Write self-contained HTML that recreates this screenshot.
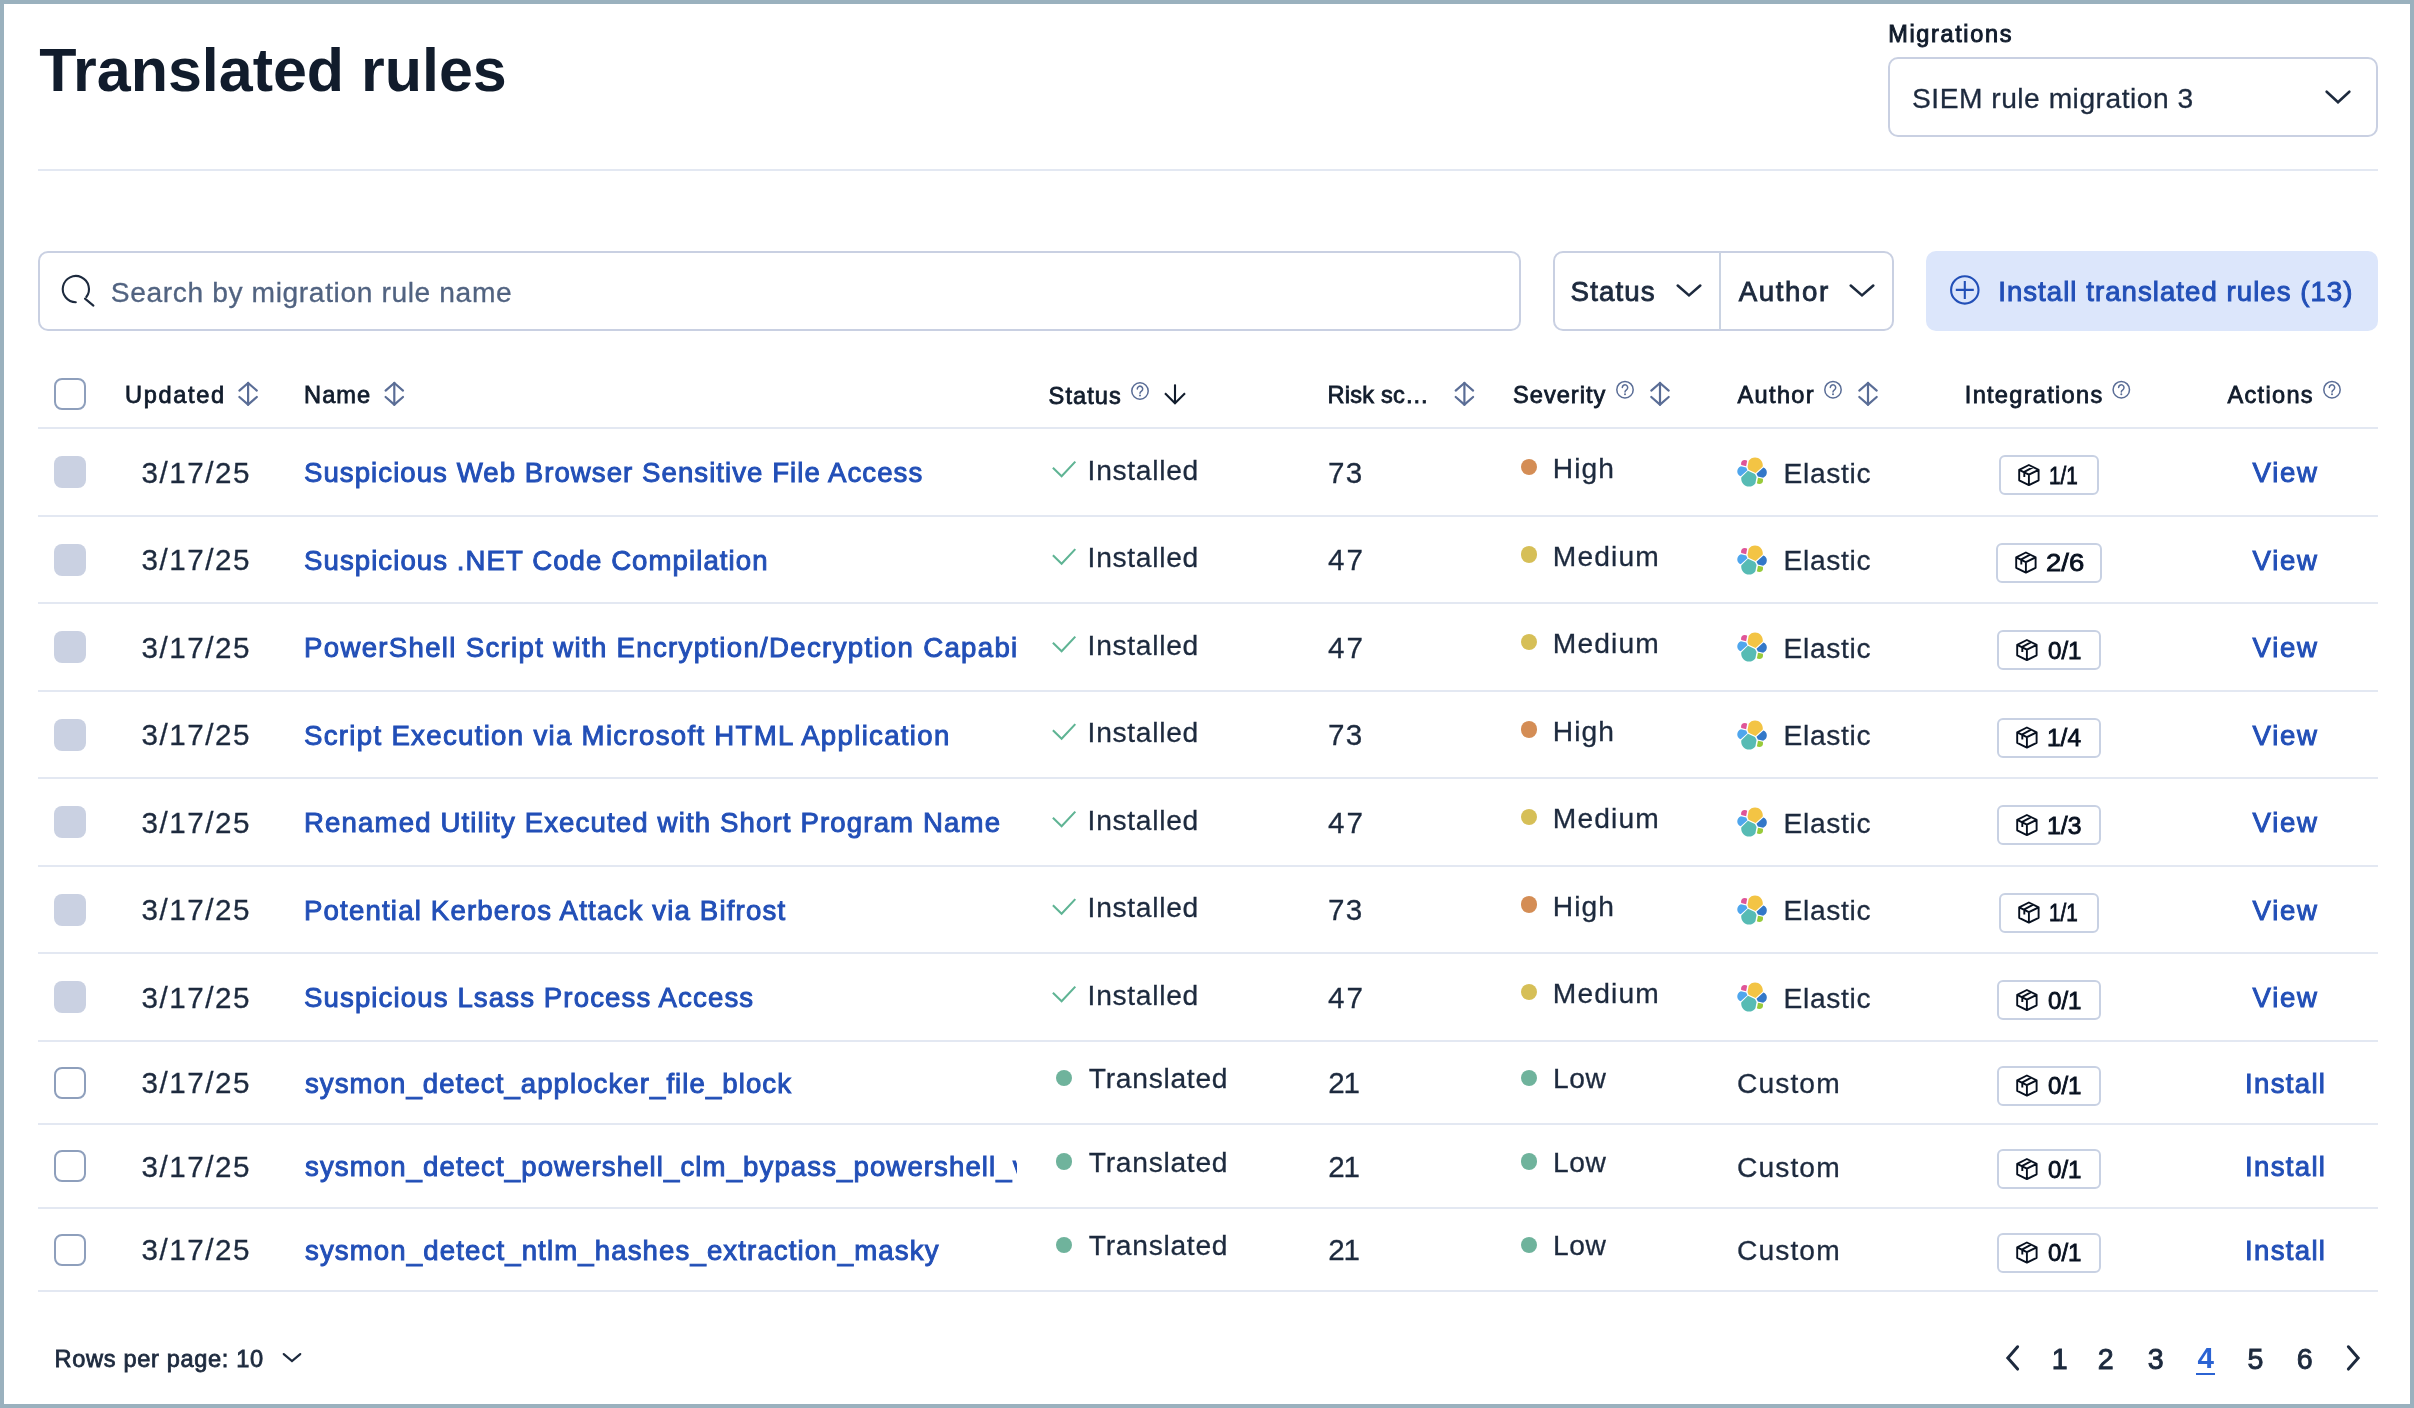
<!DOCTYPE html><html><head><meta charset="utf-8"><title>Translated rules</title><style>

html,body{margin:0;padding:0;}
body{width:2414px;height:1408px;background:#fff;position:relative;overflow:hidden;font-family:"Liberation Sans",sans-serif;}
.t{position:absolute;white-space:nowrap;line-height:40px;height:40px;}
.a{position:absolute;}
.hl{position:absolute;left:38px;width:2340px;height:2px;background:#e3e8f2;}
.box{position:absolute;box-sizing:border-box;border:2px solid #c9d0e2;background:#fff;}
.cb{position:absolute;box-sizing:border-box;width:32px;height:32px;border-radius:8px;}
.cb.on{border:2px solid #8e9fbc;background:#fff;}
.cb.off{background:#cad1e2;}
.dot{position:absolute;width:16.4px;height:16.4px;border-radius:50%;}
svg{position:absolute;overflow:visible;}
#root{position:absolute;left:0;top:0;width:2414px;height:1408px;will-change:transform;background:#fff;}

</style></head><body><div id="root">
<div class="a" style="left:0;top:0;width:2414px;height:1408px;box-sizing:border-box;border:4px solid #9ab1be;"></div>
<div class="hl" style="top:169px;"></div>
<div class="hl" style="top:427px;"></div>
<div class="hl" style="top:515px;"></div>
<div class="hl" style="top:602px;"></div>
<div class="hl" style="top:690px;"></div>
<div class="hl" style="top:777px;"></div>
<div class="hl" style="top:865px;"></div>
<div class="hl" style="top:952px;"></div>
<div class="hl" style="top:1040px;"></div>
<div class="hl" style="top:1123px;"></div>
<div class="hl" style="top:1207px;"></div>
<div class="hl" style="top:1290px;"></div>
<div class="box" style="left:1888px;top:57px;width:490px;height:80px;border-radius:10px;"></div>
<svg style="left:0;top:0" width="1" height="1"><path d="M2326.66 91.71 L2338.00 102.18 L2349.34 91.71" fill="none" stroke="#1d2a3e" stroke-width="2.6" stroke-linecap="round" stroke-linejoin="miter"/></svg>
<div class="box" style="left:38px;top:251px;width:1483px;height:80px;border-radius:10px;"></div>
<svg style="left:0;top:0" width="1" height="1"><g fill="none" stroke="#1d2a3e" stroke-width="2.1" stroke-linecap="round"><path d="M75.8 302.2 A13.1 13.1 0 1 1 86.3 297.0"/><path d="M85.0 298.6 L93.4 305.6"/></g></svg>
<div class="box" style="left:1553px;top:251px;width:341px;height:80px;border-radius:10px;"></div>
<div class="a" style="left:1719px;top:252px;width:2px;height:78px;background:#cad3e2;"></div>
<svg style="left:0;top:0" width="1" height="1"><path d="M1677.71 285.51 L1689.00 295.38 L1700.29 285.51" fill="none" stroke="#1d2a3e" stroke-width="2.6" stroke-linecap="round" stroke-linejoin="miter"/></svg>
<svg style="left:0;top:0" width="1" height="1"><path d="M1850.71 285.51 L1862.00 295.38 L1873.29 285.51" fill="none" stroke="#1d2a3e" stroke-width="2.6" stroke-linecap="round" stroke-linejoin="miter"/></svg>
<div class="a" style="left:1926px;top:251px;width:452px;height:80px;border-radius:10px;background:#dce6fb;"></div>
<svg style="left:0;top:0" width="1" height="1"><g fill="none" stroke="#224fb7" stroke-width="2.1" stroke-linecap="butt"><circle cx="1964.8" cy="289.9" r="13.7"/><path d="M1955.8 289.9 H1973.8 M1964.8 280.9 V298.9"/></g></svg>
<div class="cb on" style="left:54px;top:378px;"></div>
<svg style="left:0;top:0" width="1" height="1"><g fill="none" stroke="#5a6d96" stroke-width="2.2" stroke-linecap="round" stroke-linejoin="round"><path d="M248.1 382.8 V404.8"/><path d="M239.4 390.6 L248.1 383.0 L256.8 390.6"/><path d="M239.4 397.0 L248.1 404.6 L256.8 397.0"/></g></svg>
<svg style="left:0;top:0" width="1" height="1"><g fill="none" stroke="#5a6d96" stroke-width="2.2" stroke-linecap="round" stroke-linejoin="round"><path d="M394.3 382.8 V404.8"/><path d="M385.6 390.6 L394.3 383.0 L403.0 390.6"/><path d="M385.6 397.0 L394.3 404.6 L403.0 397.0"/></g></svg>
<svg style="left:0;top:0" width="1" height="1"><g fill="none" stroke="#5a6d96" stroke-width="2.2" stroke-linecap="round" stroke-linejoin="round"><path d="M1464.4 382.8 V404.8"/><path d="M1455.7 390.6 L1464.4 383.0 L1473.1000000000001 390.6"/><path d="M1455.7 397.0 L1464.4 404.6 L1473.1000000000001 397.0"/></g></svg>
<svg style="left:0;top:0" width="1" height="1"><g fill="none" stroke="#5a6d96" stroke-width="2.2" stroke-linecap="round" stroke-linejoin="round"><path d="M1660 382.8 V404.8"/><path d="M1651.3 390.6 L1660 383.0 L1668.7 390.6"/><path d="M1651.3 397.0 L1660 404.6 L1668.7 397.0"/></g></svg>
<svg style="left:0;top:0" width="1" height="1"><g fill="none" stroke="#5a6d96" stroke-width="2.2" stroke-linecap="round" stroke-linejoin="round"><path d="M1868 382.8 V404.8"/><path d="M1859.3 390.6 L1868 383.0 L1876.7 390.6"/><path d="M1859.3 397.0 L1868 404.6 L1876.7 397.0"/></g></svg>
<svg style="left:0;top:0" width="1" height="1"><g fill="none" stroke="#111c2c" stroke-width="2.1" stroke-linecap="butt" stroke-linejoin="miter"><path d="M1175 384.4 V403.0"/><path d="M1165 393.2 L1175 403.2 L1185 393.2"/></g></svg>
<svg style="left:0;top:0" width="1" height="1"><g fill="none" stroke="#5a6d96" stroke-width="1.5"><circle cx="1140" cy="391.0" r="8.2"/><path d="M1137.3 388.9 a2.7 2.7 0 1 1 4.2 2.2 c-1 .7 -1.5 1.1 -1.5 2.2" stroke-linecap="round"/></g><circle cx="1140" cy="395.6" r="1" fill="#5a6d96"/></svg>
<svg style="left:0;top:0" width="1" height="1"><g fill="none" stroke="#5a6d96" stroke-width="1.5"><circle cx="1625" cy="389.7" r="8.2"/><path d="M1622.3 387.59999999999997 a2.7 2.7 0 1 1 4.2 2.2 c-1 .7 -1.5 1.1 -1.5 2.2" stroke-linecap="round"/></g><circle cx="1625" cy="394.3" r="1" fill="#5a6d96"/></svg>
<svg style="left:0;top:0" width="1" height="1"><g fill="none" stroke="#5a6d96" stroke-width="1.5"><circle cx="1833" cy="389.7" r="8.2"/><path d="M1830.3 387.59999999999997 a2.7 2.7 0 1 1 4.2 2.2 c-1 .7 -1.5 1.1 -1.5 2.2" stroke-linecap="round"/></g><circle cx="1833" cy="394.3" r="1" fill="#5a6d96"/></svg>
<svg style="left:0;top:0" width="1" height="1"><g fill="none" stroke="#5a6d96" stroke-width="1.5"><circle cx="2121.3" cy="389.7" r="8.2"/><path d="M2118.6000000000004 387.59999999999997 a2.7 2.7 0 1 1 4.2 2.2 c-1 .7 -1.5 1.1 -1.5 2.2" stroke-linecap="round"/></g><circle cx="2121.3" cy="394.3" r="1" fill="#5a6d96"/></svg>
<svg style="left:0;top:0" width="1" height="1"><g fill="none" stroke="#5a6d96" stroke-width="1.5"><circle cx="2332" cy="389.7" r="8.2"/><path d="M2329.3 387.59999999999997 a2.7 2.7 0 1 1 4.2 2.2 c-1 .7 -1.5 1.1 -1.5 2.2" stroke-linecap="round"/></g><circle cx="2332" cy="394.3" r="1" fill="#5a6d96"/></svg>
<div class="cb off" style="left:54px;top:456.0px;"></div>
<svg style="left:0;top:0" width="1" height="1"><path d="M1052.9 467.8 L1061.6 476.2 L1075.3 461.6" fill="none" stroke="#5fb494" stroke-width="2.1" stroke-linecap="butt" stroke-linejoin="miter"/></svg>
<div class="dot" style="left:1520.9px;top:458.8px;background:#d48d55;"></div>
<svg style="left:1736px;top:456.0px" width="32" height="32" viewBox="0 0 32 32"><path fill="#f3c444" d="M12.58 13.787l7.002 3.211 7.066-6.213a7.849 7.849 0 00.152-1.557c0-4.287-3.46-7.762-7.73-7.762a7.705 7.705 0 00-6.354 3.373L11.54 10.96l1.04 2.826z"/><path fill="#57bbb4" d="M5.373 21.223A7.966 7.966 0 005.22 22.8c0 4.3 3.473 7.787 7.76 7.787a7.745 7.745 0 006.408-3.409l1.167-6.108-1.557-2.986-7.029-3.216-6.596 6.355z"/><path fill="#df5598" d="M5.33 9.057l4.8 1.137 1.05-5.48A3.79 3.79 0 008.87 3.92a3.812 3.812 0 00-3.8 3.82c0 .465.084.91.24 1.317z"/><path fill="#4fa6ed" d="M4.915 10.205c-2.143.712-3.641 2.775-3.641 5.07a5.36 5.36 0 003.42 5.005l6.736-6.107-1.236-2.65-5.279-1.318z"/><path fill="#98ca3a" d="M20.919 27.173a3.78 3.78 0 002.3.788 3.81 3.81 0 003.803-3.82c0-.466-.084-.91-.24-1.318l-4.796-1.126-1.067 5.476z"/><path fill="#3378c8" d="M21.894 20.442l5.28 1.238c2.144-.71 3.642-2.774 3.642-5.07a5.353 5.353 0 00-3.429-4.997l-6.905 6.067 1.412 2.762z"/></svg>
<div class="box" style="left:1999px;top:455.0px;width:100px;height:40px;border-radius:6px;border-color:#c8d1e3;"></div>
<svg style="left:0;top:0" width="1" height="1"><path d="M2028.9 465.0 L2038.6 469.8 L2038.6 480.3 L2028.9 485.1 L2019.2 480.3 L2019.2 469.8 Z M2019.2 469.8 L2028.9 474.7 L2038.6 469.8 M2028.9 474.7 L2028.9 485.1 M2033.2 467.2 L2024.3 471.9 L2024.3 476.9" fill="none" stroke="#07101f" stroke-width="1.9" stroke-linejoin="round" stroke-linecap="butt"/></svg>
<div class="cb off" style="left:54px;top:543.5px;"></div>
<svg style="left:0;top:0" width="1" height="1"><path d="M1052.9 555.3 L1061.6 563.7 L1075.3 549.1" fill="none" stroke="#5fb494" stroke-width="2.1" stroke-linecap="butt" stroke-linejoin="miter"/></svg>
<div class="dot" style="left:1520.9px;top:546.3px;background:#d6bf57;"></div>
<svg style="left:1736px;top:543.5px" width="32" height="32" viewBox="0 0 32 32"><path fill="#f3c444" d="M12.58 13.787l7.002 3.211 7.066-6.213a7.849 7.849 0 00.152-1.557c0-4.287-3.46-7.762-7.73-7.762a7.705 7.705 0 00-6.354 3.373L11.54 10.96l1.04 2.826z"/><path fill="#57bbb4" d="M5.373 21.223A7.966 7.966 0 005.22 22.8c0 4.3 3.473 7.787 7.76 7.787a7.745 7.745 0 006.408-3.409l1.167-6.108-1.557-2.986-7.029-3.216-6.596 6.355z"/><path fill="#df5598" d="M5.33 9.057l4.8 1.137 1.05-5.48A3.79 3.79 0 008.87 3.92a3.812 3.812 0 00-3.8 3.82c0 .465.084.91.24 1.317z"/><path fill="#4fa6ed" d="M4.915 10.205c-2.143.712-3.641 2.775-3.641 5.07a5.36 5.36 0 003.42 5.005l6.736-6.107-1.236-2.65-5.279-1.318z"/><path fill="#98ca3a" d="M20.919 27.173a3.78 3.78 0 002.3.788 3.81 3.81 0 003.803-3.82c0-.466-.084-.91-.24-1.318l-4.796-1.126-1.067 5.476z"/><path fill="#3378c8" d="M21.894 20.442l5.28 1.238c2.144-.71 3.642-2.774 3.642-5.07a5.353 5.353 0 00-3.429-4.997l-6.905 6.067 1.412 2.762z"/></svg>
<div class="box" style="left:1996px;top:542.5px;width:106px;height:40px;border-radius:6px;border-color:#c8d1e3;"></div>
<svg style="left:0;top:0" width="1" height="1"><path d="M2025.9 552.5 L2035.6 557.3 L2035.6 567.8 L2025.9 572.6 L2016.2 567.8 L2016.2 557.3 Z M2016.2 557.3 L2025.9 562.2 L2035.6 557.3 M2025.9 562.2 L2025.9 572.6 M2030.2 554.7 L2021.3 559.4 L2021.3 564.4" fill="none" stroke="#07101f" stroke-width="1.9" stroke-linejoin="round" stroke-linecap="butt"/></svg>
<div class="cb off" style="left:54px;top:631.0px;"></div>
<svg style="left:0;top:0" width="1" height="1"><path d="M1052.9 642.8 L1061.6 651.2 L1075.3 636.6" fill="none" stroke="#5fb494" stroke-width="2.1" stroke-linecap="butt" stroke-linejoin="miter"/></svg>
<div class="dot" style="left:1520.9px;top:633.8px;background:#d6bf57;"></div>
<svg style="left:1736px;top:631.0px" width="32" height="32" viewBox="0 0 32 32"><path fill="#f3c444" d="M12.58 13.787l7.002 3.211 7.066-6.213a7.849 7.849 0 00.152-1.557c0-4.287-3.46-7.762-7.73-7.762a7.705 7.705 0 00-6.354 3.373L11.54 10.96l1.04 2.826z"/><path fill="#57bbb4" d="M5.373 21.223A7.966 7.966 0 005.22 22.8c0 4.3 3.473 7.787 7.76 7.787a7.745 7.745 0 006.408-3.409l1.167-6.108-1.557-2.986-7.029-3.216-6.596 6.355z"/><path fill="#df5598" d="M5.33 9.057l4.8 1.137 1.05-5.48A3.79 3.79 0 008.87 3.92a3.812 3.812 0 00-3.8 3.82c0 .465.084.91.24 1.317z"/><path fill="#4fa6ed" d="M4.915 10.205c-2.143.712-3.641 2.775-3.641 5.07a5.36 5.36 0 003.42 5.005l6.736-6.107-1.236-2.65-5.279-1.318z"/><path fill="#98ca3a" d="M20.919 27.173a3.78 3.78 0 002.3.788 3.81 3.81 0 003.803-3.82c0-.466-.084-.91-.24-1.318l-4.796-1.126-1.067 5.476z"/><path fill="#3378c8" d="M21.894 20.442l5.28 1.238c2.144-.71 3.642-2.774 3.642-5.07a5.353 5.353 0 00-3.429-4.997l-6.905 6.067 1.412 2.762z"/></svg>
<div class="box" style="left:1997px;top:630.0px;width:104px;height:40px;border-radius:6px;border-color:#c8d1e3;"></div>
<svg style="left:0;top:0" width="1" height="1"><path d="M2026.9 640.0 L2036.6 644.8 L2036.6 655.3 L2026.9 660.1 L2017.2 655.3 L2017.2 644.8 Z M2017.2 644.8 L2026.9 649.7 L2036.6 644.8 M2026.9 649.7 L2026.9 660.1 M2031.2 642.2 L2022.3 646.9 L2022.3 651.9" fill="none" stroke="#07101f" stroke-width="1.9" stroke-linejoin="round" stroke-linecap="butt"/></svg>
<div class="cb off" style="left:54px;top:718.5px;"></div>
<svg style="left:0;top:0" width="1" height="1"><path d="M1052.9 730.3 L1061.6 738.7 L1075.3 724.1" fill="none" stroke="#5fb494" stroke-width="2.1" stroke-linecap="butt" stroke-linejoin="miter"/></svg>
<div class="dot" style="left:1520.9px;top:721.3px;background:#d48d55;"></div>
<svg style="left:1736px;top:718.5px" width="32" height="32" viewBox="0 0 32 32"><path fill="#f3c444" d="M12.58 13.787l7.002 3.211 7.066-6.213a7.849 7.849 0 00.152-1.557c0-4.287-3.46-7.762-7.73-7.762a7.705 7.705 0 00-6.354 3.373L11.54 10.96l1.04 2.826z"/><path fill="#57bbb4" d="M5.373 21.223A7.966 7.966 0 005.22 22.8c0 4.3 3.473 7.787 7.76 7.787a7.745 7.745 0 006.408-3.409l1.167-6.108-1.557-2.986-7.029-3.216-6.596 6.355z"/><path fill="#df5598" d="M5.33 9.057l4.8 1.137 1.05-5.48A3.79 3.79 0 008.87 3.92a3.812 3.812 0 00-3.8 3.82c0 .465.084.91.24 1.317z"/><path fill="#4fa6ed" d="M4.915 10.205c-2.143.712-3.641 2.775-3.641 5.07a5.36 5.36 0 003.42 5.005l6.736-6.107-1.236-2.65-5.279-1.318z"/><path fill="#98ca3a" d="M20.919 27.173a3.78 3.78 0 002.3.788 3.81 3.81 0 003.803-3.82c0-.466-.084-.91-.24-1.318l-4.796-1.126-1.067 5.476z"/><path fill="#3378c8" d="M21.894 20.442l5.28 1.238c2.144-.71 3.642-2.774 3.642-5.07a5.353 5.353 0 00-3.429-4.997l-6.905 6.067 1.412 2.762z"/></svg>
<div class="box" style="left:1997px;top:717.5px;width:104px;height:40px;border-radius:6px;border-color:#c8d1e3;"></div>
<svg style="left:0;top:0" width="1" height="1"><path d="M2026.9 727.5 L2036.6 732.3 L2036.6 742.8 L2026.9 747.6 L2017.2 742.8 L2017.2 732.3 Z M2017.2 732.3 L2026.9 737.2 L2036.6 732.3 M2026.9 737.2 L2026.9 747.6 M2031.2 729.7 L2022.3 734.4 L2022.3 739.4" fill="none" stroke="#07101f" stroke-width="1.9" stroke-linejoin="round" stroke-linecap="butt"/></svg>
<div class="cb off" style="left:54px;top:806.0px;"></div>
<svg style="left:0;top:0" width="1" height="1"><path d="M1052.9 817.8 L1061.6 826.2 L1075.3 811.6" fill="none" stroke="#5fb494" stroke-width="2.1" stroke-linecap="butt" stroke-linejoin="miter"/></svg>
<div class="dot" style="left:1520.9px;top:808.8px;background:#d6bf57;"></div>
<svg style="left:1736px;top:806.0px" width="32" height="32" viewBox="0 0 32 32"><path fill="#f3c444" d="M12.58 13.787l7.002 3.211 7.066-6.213a7.849 7.849 0 00.152-1.557c0-4.287-3.46-7.762-7.73-7.762a7.705 7.705 0 00-6.354 3.373L11.54 10.96l1.04 2.826z"/><path fill="#57bbb4" d="M5.373 21.223A7.966 7.966 0 005.22 22.8c0 4.3 3.473 7.787 7.76 7.787a7.745 7.745 0 006.408-3.409l1.167-6.108-1.557-2.986-7.029-3.216-6.596 6.355z"/><path fill="#df5598" d="M5.33 9.057l4.8 1.137 1.05-5.48A3.79 3.79 0 008.87 3.92a3.812 3.812 0 00-3.8 3.82c0 .465.084.91.24 1.317z"/><path fill="#4fa6ed" d="M4.915 10.205c-2.143.712-3.641 2.775-3.641 5.07a5.36 5.36 0 003.42 5.005l6.736-6.107-1.236-2.65-5.279-1.318z"/><path fill="#98ca3a" d="M20.919 27.173a3.78 3.78 0 002.3.788 3.81 3.81 0 003.803-3.82c0-.466-.084-.91-.24-1.318l-4.796-1.126-1.067 5.476z"/><path fill="#3378c8" d="M21.894 20.442l5.28 1.238c2.144-.71 3.642-2.774 3.642-5.07a5.353 5.353 0 00-3.429-4.997l-6.905 6.067 1.412 2.762z"/></svg>
<div class="box" style="left:1997px;top:805.0px;width:104px;height:40px;border-radius:6px;border-color:#c8d1e3;"></div>
<svg style="left:0;top:0" width="1" height="1"><path d="M2026.9 815.0 L2036.6 819.8 L2036.6 830.3 L2026.9 835.1 L2017.2 830.3 L2017.2 819.8 Z M2017.2 819.8 L2026.9 824.7 L2036.6 819.8 M2026.9 824.7 L2026.9 835.1 M2031.2 817.2 L2022.3 821.9 L2022.3 826.9" fill="none" stroke="#07101f" stroke-width="1.9" stroke-linejoin="round" stroke-linecap="butt"/></svg>
<div class="cb off" style="left:54px;top:893.5px;"></div>
<svg style="left:0;top:0" width="1" height="1"><path d="M1052.9 905.3 L1061.6 913.7 L1075.3 899.1" fill="none" stroke="#5fb494" stroke-width="2.1" stroke-linecap="butt" stroke-linejoin="miter"/></svg>
<div class="dot" style="left:1520.9px;top:896.3px;background:#d48d55;"></div>
<svg style="left:1736px;top:893.5px" width="32" height="32" viewBox="0 0 32 32"><path fill="#f3c444" d="M12.58 13.787l7.002 3.211 7.066-6.213a7.849 7.849 0 00.152-1.557c0-4.287-3.46-7.762-7.73-7.762a7.705 7.705 0 00-6.354 3.373L11.54 10.96l1.04 2.826z"/><path fill="#57bbb4" d="M5.373 21.223A7.966 7.966 0 005.22 22.8c0 4.3 3.473 7.787 7.76 7.787a7.745 7.745 0 006.408-3.409l1.167-6.108-1.557-2.986-7.029-3.216-6.596 6.355z"/><path fill="#df5598" d="M5.33 9.057l4.8 1.137 1.05-5.48A3.79 3.79 0 008.87 3.92a3.812 3.812 0 00-3.8 3.82c0 .465.084.91.24 1.317z"/><path fill="#4fa6ed" d="M4.915 10.205c-2.143.712-3.641 2.775-3.641 5.07a5.36 5.36 0 003.42 5.005l6.736-6.107-1.236-2.65-5.279-1.318z"/><path fill="#98ca3a" d="M20.919 27.173a3.78 3.78 0 002.3.788 3.81 3.81 0 003.803-3.82c0-.466-.084-.91-.24-1.318l-4.796-1.126-1.067 5.476z"/><path fill="#3378c8" d="M21.894 20.442l5.28 1.238c2.144-.71 3.642-2.774 3.642-5.07a5.353 5.353 0 00-3.429-4.997l-6.905 6.067 1.412 2.762z"/></svg>
<div class="box" style="left:1999px;top:892.5px;width:100px;height:40px;border-radius:6px;border-color:#c8d1e3;"></div>
<svg style="left:0;top:0" width="1" height="1"><path d="M2028.9 902.5 L2038.6 907.3 L2038.6 917.8 L2028.9 922.6 L2019.2 917.8 L2019.2 907.3 Z M2019.2 907.3 L2028.9 912.2 L2038.6 907.3 M2028.9 912.2 L2028.9 922.6 M2033.2 904.7 L2024.3 909.4 L2024.3 914.4" fill="none" stroke="#07101f" stroke-width="1.9" stroke-linejoin="round" stroke-linecap="butt"/></svg>
<div class="cb off" style="left:54px;top:981.0px;"></div>
<svg style="left:0;top:0" width="1" height="1"><path d="M1052.9 992.8 L1061.6 1001.2 L1075.3 986.6" fill="none" stroke="#5fb494" stroke-width="2.1" stroke-linecap="butt" stroke-linejoin="miter"/></svg>
<div class="dot" style="left:1520.9px;top:983.8px;background:#d6bf57;"></div>
<svg style="left:1736px;top:981.0px" width="32" height="32" viewBox="0 0 32 32"><path fill="#f3c444" d="M12.58 13.787l7.002 3.211 7.066-6.213a7.849 7.849 0 00.152-1.557c0-4.287-3.46-7.762-7.73-7.762a7.705 7.705 0 00-6.354 3.373L11.54 10.96l1.04 2.826z"/><path fill="#57bbb4" d="M5.373 21.223A7.966 7.966 0 005.22 22.8c0 4.3 3.473 7.787 7.76 7.787a7.745 7.745 0 006.408-3.409l1.167-6.108-1.557-2.986-7.029-3.216-6.596 6.355z"/><path fill="#df5598" d="M5.33 9.057l4.8 1.137 1.05-5.48A3.79 3.79 0 008.87 3.92a3.812 3.812 0 00-3.8 3.82c0 .465.084.91.24 1.317z"/><path fill="#4fa6ed" d="M4.915 10.205c-2.143.712-3.641 2.775-3.641 5.07a5.36 5.36 0 003.42 5.005l6.736-6.107-1.236-2.65-5.279-1.318z"/><path fill="#98ca3a" d="M20.919 27.173a3.78 3.78 0 002.3.788 3.81 3.81 0 003.803-3.82c0-.466-.084-.91-.24-1.318l-4.796-1.126-1.067 5.476z"/><path fill="#3378c8" d="M21.894 20.442l5.28 1.238c2.144-.71 3.642-2.774 3.642-5.07a5.353 5.353 0 00-3.429-4.997l-6.905 6.067 1.412 2.762z"/></svg>
<div class="box" style="left:1997px;top:980.0px;width:104px;height:40px;border-radius:6px;border-color:#c8d1e3;"></div>
<svg style="left:0;top:0" width="1" height="1"><path d="M2026.9 990.0 L2036.6 994.8 L2036.6 1005.3 L2026.9 1010.1 L2017.2 1005.3 L2017.2 994.8 Z M2017.2 994.8 L2026.9 999.7 L2036.6 994.8 M2026.9 999.7 L2026.9 1010.1 M2031.2 992.2 L2022.3 996.9 L2022.3 1001.9" fill="none" stroke="#07101f" stroke-width="1.9" stroke-linejoin="round" stroke-linecap="butt"/></svg>
<div class="cb on" style="left:54px;top:1066.5px;"></div>
<div class="dot" style="left:1055.8px;top:1069.8px;background:#6fb39c;"></div>
<div class="dot" style="left:1520.9px;top:1069.8px;background:#6fb39c;"></div>
<div class="box" style="left:1997px;top:1065.5px;width:104px;height:40px;border-radius:6px;border-color:#c8d1e3;"></div>
<svg style="left:0;top:0" width="1" height="1"><path d="M2026.9 1075.5 L2036.6 1080.3 L2036.6 1090.8 L2026.9 1095.6 L2017.2 1090.8 L2017.2 1080.3 Z M2017.2 1080.3 L2026.9 1085.2 L2036.6 1080.3 M2026.9 1085.2 L2026.9 1095.6 M2031.2 1077.7 L2022.3 1082.4 L2022.3 1087.4" fill="none" stroke="#07101f" stroke-width="1.9" stroke-linejoin="round" stroke-linecap="butt"/></svg>
<div class="cb on" style="left:54px;top:1150.0px;"></div>
<div class="dot" style="left:1055.8px;top:1153.3px;background:#6fb39c;"></div>
<div class="dot" style="left:1520.9px;top:1153.3px;background:#6fb39c;"></div>
<div class="box" style="left:1997px;top:1149.0px;width:104px;height:40px;border-radius:6px;border-color:#c8d1e3;"></div>
<svg style="left:0;top:0" width="1" height="1"><path d="M2026.9 1159.0 L2036.6 1163.8 L2036.6 1174.3 L2026.9 1179.1 L2017.2 1174.3 L2017.2 1163.8 Z M2017.2 1163.8 L2026.9 1168.7 L2036.6 1163.8 M2026.9 1168.7 L2026.9 1179.1 M2031.2 1161.2 L2022.3 1165.9 L2022.3 1170.9" fill="none" stroke="#07101f" stroke-width="1.9" stroke-linejoin="round" stroke-linecap="butt"/></svg>
<div class="cb on" style="left:54px;top:1233.5px;"></div>
<div class="dot" style="left:1055.8px;top:1236.8px;background:#6fb39c;"></div>
<div class="dot" style="left:1520.9px;top:1236.8px;background:#6fb39c;"></div>
<div class="box" style="left:1997px;top:1232.5px;width:104px;height:40px;border-radius:6px;border-color:#c8d1e3;"></div>
<svg style="left:0;top:0" width="1" height="1"><path d="M2026.9 1242.5 L2036.6 1247.3 L2036.6 1257.8 L2026.9 1262.6 L2017.2 1257.8 L2017.2 1247.3 Z M2017.2 1247.3 L2026.9 1252.2 L2036.6 1247.3 M2026.9 1252.2 L2026.9 1262.6 M2031.2 1244.7 L2022.3 1249.4 L2022.3 1254.4" fill="none" stroke="#07101f" stroke-width="1.9" stroke-linejoin="round" stroke-linecap="butt"/></svg>
<svg style="left:0;top:0" width="1" height="1"><path d="M283.77 1354.07 L292.00 1361.16 L300.23 1354.07" fill="none" stroke="#1d2a3e" stroke-width="2.2" stroke-linecap="round" stroke-linejoin="miter"/></svg>
<svg style="left:0;top:0" width="1" height="1"><path d="M2017.60 1346.75 L2007.85 1357.90 L2017.60 1369.05" fill="none" stroke="#1d2a3e" stroke-width="3" stroke-linecap="round" stroke-linejoin="miter"/></svg>
<svg style="left:0;top:0" width="1" height="1"><path d="M2348.40 1346.75 L2358.15 1357.90 L2348.40 1369.05" fill="none" stroke="#1d2a3e" stroke-width="3" stroke-linecap="round" stroke-linejoin="miter"/></svg>
<div class="a" style="left:2196px;top:1373px;width:19px;height:2px;background:#2b63d3;"></div>
<div class="t" id="title" style="left:39.20px;top:49.56px;font-size:61px;font-weight:700;color:#111c2c;letter-spacing:-0.020px;">Translated rules</div>
<div class="t" id="miglabel" style="left:1888.20px;top:13.96px;font-size:23.5px;font-weight:400;color:#111c2c;letter-spacing:1.644px;-webkit-text-stroke:0.95px #111c2c;">Migrations</div>
<div class="t" id="migsel" style="left:1912.00px;top:78.13px;font-size:28.2px;font-weight:400;color:#1d2a3e;letter-spacing:0.505px;-webkit-text-stroke:0.3px #1d2a3e;">SIEM rule migration 3</div>
<div class="t" id="search" style="left:110.80px;top:271.73px;font-size:28.2px;font-weight:400;color:#516381;letter-spacing:0.607px;-webkit-text-stroke:0.3px #516381;">Search by migration rule name</div>
<div class="t" id="fstatus" style="left:1570.60px;top:272.10px;font-size:27.7px;font-weight:400;color:#1d2a3e;letter-spacing:1.080px;-webkit-text-stroke:0.85px #1d2a3e;">Status</div>
<div class="t" id="fauthor" style="left:1738.80px;top:272.10px;font-size:27.7px;font-weight:400;color:#1d2a3e;letter-spacing:1.580px;-webkit-text-stroke:0.85px #1d2a3e;">Author</div>
<div class="t" id="install" style="left:1998.20px;top:272.14px;font-size:27.6px;font-weight:400;color:#224fb7;letter-spacing:1.039px;-webkit-text-stroke:0.95px #224fb7;">Install translated rules (13)</div>
<div class="t" id="hupd" style="left:125.00px;top:375.42px;font-size:23.6px;font-weight:400;color:#111c2c;letter-spacing:1.667px;-webkit-text-stroke:0.8px #111c2c;">Updated</div>
<div class="t" id="hname" style="left:304.00px;top:375.42px;font-size:23.6px;font-weight:400;color:#111c2c;letter-spacing:1.100px;-webkit-text-stroke:0.8px #111c2c;">Name</div>
<div class="t" id="hstatus" style="left:1048.60px;top:375.92px;font-size:23.6px;font-weight:400;color:#111c2c;letter-spacing:1.060px;-webkit-text-stroke:0.8px #111c2c;">Status</div>
<div class="t" id="hrisk" style="left:1327.40px;top:375.42px;font-size:23.6px;font-weight:400;color:#111c2c;letter-spacing:0.229px;-webkit-text-stroke:0.8px #111c2c;">Risk sc…</div>
<div class="t" id="hsev" style="left:1513.00px;top:375.42px;font-size:23.6px;font-weight:400;color:#111c2c;letter-spacing:1.014px;-webkit-text-stroke:0.8px #111c2c;">Severity</div>
<div class="t" id="hauth" style="left:1737.40px;top:375.42px;font-size:23.6px;font-weight:400;color:#111c2c;letter-spacing:1.360px;-webkit-text-stroke:0.8px #111c2c;">Author</div>
<div class="t" id="hint" style="left:1964.80px;top:375.42px;font-size:23.6px;font-weight:400;color:#111c2c;letter-spacing:1.282px;-webkit-text-stroke:0.8px #111c2c;">Integrations</div>
<div class="t" id="hact" style="left:2227.40px;top:375.42px;font-size:23.6px;font-weight:400;color:#111c2c;letter-spacing:1.317px;-webkit-text-stroke:0.8px #111c2c;">Actions</div>
<div class="t" id="d0" style="left:141.60px;top:452.54px;font-size:29.6px;font-weight:400;color:#1d2a3e;letter-spacing:1.533px;-webkit-text-stroke:0.3px #1d2a3e;">3/17/25</div>
<div class="t" id="n0" style="left:304.00px;top:453.04px;font-size:27.6px;font-weight:400;color:#224fb7;letter-spacing:1.051px;-webkit-text-stroke:0.95px #224fb7;">Suspicious Web Browser Sensitive File Access</div>
<div class="t" id="s0" style="left:1087.60px;top:449.93px;font-size:28.2px;font-weight:400;color:#1d2a3e;letter-spacing:0.712px;-webkit-text-stroke:0.3px #1d2a3e;">Installed</div>
<div class="t" id="r0" style="left:1328.00px;top:452.54px;font-size:29.6px;font-weight:400;color:#1d2a3e;letter-spacing:1.400px;-webkit-text-stroke:0.3px #1d2a3e;">73</div>
<div class="t" id="v0" style="left:1552.80px;top:448.03px;font-size:28.2px;font-weight:400;color:#1d2a3e;letter-spacing:1.033px;-webkit-text-stroke:0.3px #1d2a3e;">High</div>
<div class="t" id="a0" style="left:1783.60px;top:452.83px;font-size:28.2px;font-weight:400;color:#1d2a3e;letter-spacing:0.667px;-webkit-text-stroke:0.3px #1d2a3e;">Elastic</div>
<div class="t" id="x0" style="left:2252.60px;top:453.04px;font-size:27.6px;font-weight:400;color:#224fb7;letter-spacing:1.633px;-webkit-text-stroke:0.95px #224fb7;">View</div>
<div class="t" id="d1" style="left:141.60px;top:540.04px;font-size:29.6px;font-weight:400;color:#1d2a3e;letter-spacing:1.533px;-webkit-text-stroke:0.3px #1d2a3e;">3/17/25</div>
<div class="t" id="n1" style="left:304.00px;top:540.54px;font-size:27.6px;font-weight:400;color:#224fb7;letter-spacing:1.065px;-webkit-text-stroke:0.95px #224fb7;">Suspicious .NET Code Compilation</div>
<div class="t" id="s1" style="left:1087.60px;top:537.43px;font-size:28.2px;font-weight:400;color:#1d2a3e;letter-spacing:0.712px;-webkit-text-stroke:0.3px #1d2a3e;">Installed</div>
<div class="t" id="r1" style="left:1328.00px;top:540.04px;font-size:29.6px;font-weight:400;color:#1d2a3e;letter-spacing:2.000px;-webkit-text-stroke:0.3px #1d2a3e;">47</div>
<div class="t" id="v1" style="left:1552.80px;top:535.53px;font-size:28.2px;font-weight:400;color:#1d2a3e;letter-spacing:1.140px;-webkit-text-stroke:0.3px #1d2a3e;">Medium</div>
<div class="t" id="a1" style="left:1783.60px;top:540.33px;font-size:28.2px;font-weight:400;color:#1d2a3e;letter-spacing:0.667px;-webkit-text-stroke:0.3px #1d2a3e;">Elastic</div>
<div class="t" id="x1" style="left:2252.60px;top:540.54px;font-size:27.6px;font-weight:400;color:#224fb7;letter-spacing:1.633px;-webkit-text-stroke:0.95px #224fb7;">View</div>
<div class="t" id="d2" style="left:141.60px;top:627.54px;font-size:29.6px;font-weight:400;color:#1d2a3e;letter-spacing:1.533px;-webkit-text-stroke:0.3px #1d2a3e;">3/17/25</div>
<div class="t" id="n2" style="left:304.00px;top:628.04px;font-size:27.6px;font-weight:400;color:#224fb7;letter-spacing:1.320px;-webkit-text-stroke:0.95px #224fb7;">PowerShell Script with Encryption/Decryption Capabi</div>
<div class="t" id="s2" style="left:1087.60px;top:624.93px;font-size:28.2px;font-weight:400;color:#1d2a3e;letter-spacing:0.712px;-webkit-text-stroke:0.3px #1d2a3e;">Installed</div>
<div class="t" id="r2" style="left:1328.00px;top:627.54px;font-size:29.6px;font-weight:400;color:#1d2a3e;letter-spacing:2.000px;-webkit-text-stroke:0.3px #1d2a3e;">47</div>
<div class="t" id="v2" style="left:1552.80px;top:623.03px;font-size:28.2px;font-weight:400;color:#1d2a3e;letter-spacing:1.140px;-webkit-text-stroke:0.3px #1d2a3e;">Medium</div>
<div class="t" id="a2" style="left:1783.60px;top:627.83px;font-size:28.2px;font-weight:400;color:#1d2a3e;letter-spacing:0.667px;-webkit-text-stroke:0.3px #1d2a3e;">Elastic</div>
<div class="t" id="x2" style="left:2252.60px;top:628.04px;font-size:27.6px;font-weight:400;color:#224fb7;letter-spacing:1.633px;-webkit-text-stroke:0.95px #224fb7;">View</div>
<div class="t" id="d3" style="left:141.60px;top:715.04px;font-size:29.6px;font-weight:400;color:#1d2a3e;letter-spacing:1.533px;-webkit-text-stroke:0.3px #1d2a3e;">3/17/25</div>
<div class="t" id="n3" style="left:304.00px;top:715.54px;font-size:27.6px;font-weight:400;color:#224fb7;letter-spacing:1.315px;-webkit-text-stroke:0.95px #224fb7;">Script Execution via Microsoft HTML Application</div>
<div class="t" id="s3" style="left:1087.60px;top:712.43px;font-size:28.2px;font-weight:400;color:#1d2a3e;letter-spacing:0.712px;-webkit-text-stroke:0.3px #1d2a3e;">Installed</div>
<div class="t" id="r3" style="left:1328.00px;top:715.04px;font-size:29.6px;font-weight:400;color:#1d2a3e;letter-spacing:1.400px;-webkit-text-stroke:0.3px #1d2a3e;">73</div>
<div class="t" id="v3" style="left:1552.80px;top:710.53px;font-size:28.2px;font-weight:400;color:#1d2a3e;letter-spacing:1.033px;-webkit-text-stroke:0.3px #1d2a3e;">High</div>
<div class="t" id="a3" style="left:1783.60px;top:715.33px;font-size:28.2px;font-weight:400;color:#1d2a3e;letter-spacing:0.667px;-webkit-text-stroke:0.3px #1d2a3e;">Elastic</div>
<div class="t" id="x3" style="left:2252.60px;top:715.54px;font-size:27.6px;font-weight:400;color:#224fb7;letter-spacing:1.633px;-webkit-text-stroke:0.95px #224fb7;">View</div>
<div class="t" id="d4" style="left:141.60px;top:802.54px;font-size:29.6px;font-weight:400;color:#1d2a3e;letter-spacing:1.533px;-webkit-text-stroke:0.3px #1d2a3e;">3/17/25</div>
<div class="t" id="n4" style="left:304.00px;top:803.04px;font-size:27.6px;font-weight:400;color:#224fb7;letter-spacing:1.138px;-webkit-text-stroke:0.95px #224fb7;">Renamed Utility Executed with Short Program Name</div>
<div class="t" id="s4" style="left:1087.60px;top:799.93px;font-size:28.2px;font-weight:400;color:#1d2a3e;letter-spacing:0.712px;-webkit-text-stroke:0.3px #1d2a3e;">Installed</div>
<div class="t" id="r4" style="left:1328.00px;top:802.54px;font-size:29.6px;font-weight:400;color:#1d2a3e;letter-spacing:2.000px;-webkit-text-stroke:0.3px #1d2a3e;">47</div>
<div class="t" id="v4" style="left:1552.80px;top:798.03px;font-size:28.2px;font-weight:400;color:#1d2a3e;letter-spacing:1.140px;-webkit-text-stroke:0.3px #1d2a3e;">Medium</div>
<div class="t" id="a4" style="left:1783.60px;top:802.83px;font-size:28.2px;font-weight:400;color:#1d2a3e;letter-spacing:0.667px;-webkit-text-stroke:0.3px #1d2a3e;">Elastic</div>
<div class="t" id="x4" style="left:2252.60px;top:803.04px;font-size:27.6px;font-weight:400;color:#224fb7;letter-spacing:1.633px;-webkit-text-stroke:0.95px #224fb7;">View</div>
<div class="t" id="d5" style="left:141.60px;top:890.04px;font-size:29.6px;font-weight:400;color:#1d2a3e;letter-spacing:1.533px;-webkit-text-stroke:0.3px #1d2a3e;">3/17/25</div>
<div class="t" id="n5" style="left:304.00px;top:890.54px;font-size:27.6px;font-weight:400;color:#224fb7;letter-spacing:1.181px;-webkit-text-stroke:0.95px #224fb7;">Potential Kerberos Attack via Bifrost</div>
<div class="t" id="s5" style="left:1087.60px;top:887.43px;font-size:28.2px;font-weight:400;color:#1d2a3e;letter-spacing:0.712px;-webkit-text-stroke:0.3px #1d2a3e;">Installed</div>
<div class="t" id="r5" style="left:1328.00px;top:890.04px;font-size:29.6px;font-weight:400;color:#1d2a3e;letter-spacing:1.400px;-webkit-text-stroke:0.3px #1d2a3e;">73</div>
<div class="t" id="v5" style="left:1552.80px;top:885.53px;font-size:28.2px;font-weight:400;color:#1d2a3e;letter-spacing:1.033px;-webkit-text-stroke:0.3px #1d2a3e;">High</div>
<div class="t" id="a5" style="left:1783.60px;top:890.33px;font-size:28.2px;font-weight:400;color:#1d2a3e;letter-spacing:0.667px;-webkit-text-stroke:0.3px #1d2a3e;">Elastic</div>
<div class="t" id="x5" style="left:2252.60px;top:890.54px;font-size:27.6px;font-weight:400;color:#224fb7;letter-spacing:1.633px;-webkit-text-stroke:0.95px #224fb7;">View</div>
<div class="t" id="d6" style="left:141.60px;top:977.54px;font-size:29.6px;font-weight:400;color:#1d2a3e;letter-spacing:1.533px;-webkit-text-stroke:0.3px #1d2a3e;">3/17/25</div>
<div class="t" id="n6" style="left:304.00px;top:978.04px;font-size:27.6px;font-weight:400;color:#224fb7;letter-spacing:1.117px;-webkit-text-stroke:0.95px #224fb7;">Suspicious Lsass Process Access</div>
<div class="t" id="s6" style="left:1087.60px;top:974.93px;font-size:28.2px;font-weight:400;color:#1d2a3e;letter-spacing:0.712px;-webkit-text-stroke:0.3px #1d2a3e;">Installed</div>
<div class="t" id="r6" style="left:1328.00px;top:977.54px;font-size:29.6px;font-weight:400;color:#1d2a3e;letter-spacing:2.000px;-webkit-text-stroke:0.3px #1d2a3e;">47</div>
<div class="t" id="v6" style="left:1552.80px;top:973.03px;font-size:28.2px;font-weight:400;color:#1d2a3e;letter-spacing:1.140px;-webkit-text-stroke:0.3px #1d2a3e;">Medium</div>
<div class="t" id="a6" style="left:1783.60px;top:977.83px;font-size:28.2px;font-weight:400;color:#1d2a3e;letter-spacing:0.667px;-webkit-text-stroke:0.3px #1d2a3e;">Elastic</div>
<div class="t" id="x6" style="left:2252.60px;top:978.04px;font-size:27.6px;font-weight:400;color:#224fb7;letter-spacing:1.633px;-webkit-text-stroke:0.95px #224fb7;">View</div>
<div class="t" id="d7" style="left:141.60px;top:1063.04px;font-size:29.6px;font-weight:400;color:#1d2a3e;letter-spacing:1.533px;-webkit-text-stroke:0.3px #1d2a3e;">3/17/25</div>
<div class="t" id="n7" style="left:305.00px;top:1063.54px;font-size:27.6px;font-weight:400;color:#224fb7;letter-spacing:1.061px;-webkit-text-stroke:0.95px #224fb7;">sysmon_detect_applocker_file_block</div>
<div class="t" id="s7" style="left:1088.80px;top:1058.43px;font-size:28.2px;font-weight:400;color:#1d2a3e;letter-spacing:0.733px;-webkit-text-stroke:0.3px #1d2a3e;">Translated</div>
<div class="t" id="r7" style="left:1328.20px;top:1063.04px;font-size:29.6px;font-weight:400;color:#1d2a3e;letter-spacing:-1.100px;-webkit-text-stroke:0.3px #1d2a3e;">21</div>
<div class="t" id="v7" style="left:1553.00px;top:1058.43px;font-size:28.2px;font-weight:400;color:#1d2a3e;letter-spacing:0.550px;-webkit-text-stroke:0.3px #1d2a3e;">Low</div>
<div class="t" id="a7" style="left:1737.00px;top:1063.33px;font-size:28.2px;font-weight:400;color:#1d2a3e;letter-spacing:1.100px;-webkit-text-stroke:0.3px #1d2a3e;">Custom</div>
<div class="t" id="x7" style="left:2245.00px;top:1063.54px;font-size:27.6px;font-weight:400;color:#224fb7;letter-spacing:1.317px;-webkit-text-stroke:0.95px #224fb7;">Install</div>
<div class="t" id="d8" style="left:141.60px;top:1146.54px;font-size:29.6px;font-weight:400;color:#1d2a3e;letter-spacing:1.533px;-webkit-text-stroke:0.3px #1d2a3e;">3/17/25</div>
<div class="t" id="n8" style="left:305.00px;top:1147.04px;font-size:27.6px;font-weight:400;color:#224fb7;letter-spacing:1.091px;-webkit-text-stroke:0.95px #224fb7;width:712.00px;overflow:hidden;">sysmon_detect_powershell_clm_bypass_powershell_version</div>
<div class="t" id="s8" style="left:1088.80px;top:1141.93px;font-size:28.2px;font-weight:400;color:#1d2a3e;letter-spacing:0.733px;-webkit-text-stroke:0.3px #1d2a3e;">Translated</div>
<div class="t" id="r8" style="left:1328.20px;top:1146.54px;font-size:29.6px;font-weight:400;color:#1d2a3e;letter-spacing:-1.100px;-webkit-text-stroke:0.3px #1d2a3e;">21</div>
<div class="t" id="v8" style="left:1553.00px;top:1141.93px;font-size:28.2px;font-weight:400;color:#1d2a3e;letter-spacing:0.550px;-webkit-text-stroke:0.3px #1d2a3e;">Low</div>
<div class="t" id="a8" style="left:1737.00px;top:1146.83px;font-size:28.2px;font-weight:400;color:#1d2a3e;letter-spacing:1.100px;-webkit-text-stroke:0.3px #1d2a3e;">Custom</div>
<div class="t" id="x8" style="left:2245.00px;top:1147.04px;font-size:27.6px;font-weight:400;color:#224fb7;letter-spacing:1.317px;-webkit-text-stroke:0.95px #224fb7;">Install</div>
<div class="t" id="d9" style="left:141.60px;top:1230.04px;font-size:29.6px;font-weight:400;color:#1d2a3e;letter-spacing:1.533px;-webkit-text-stroke:0.3px #1d2a3e;">3/17/25</div>
<div class="t" id="n9" style="left:305.00px;top:1230.54px;font-size:27.6px;font-weight:400;color:#224fb7;letter-spacing:1.122px;-webkit-text-stroke:0.95px #224fb7;">sysmon_detect_ntlm_hashes_extraction_masky</div>
<div class="t" id="s9" style="left:1088.80px;top:1225.43px;font-size:28.2px;font-weight:400;color:#1d2a3e;letter-spacing:0.733px;-webkit-text-stroke:0.3px #1d2a3e;">Translated</div>
<div class="t" id="r9" style="left:1328.20px;top:1230.04px;font-size:29.6px;font-weight:400;color:#1d2a3e;letter-spacing:-1.100px;-webkit-text-stroke:0.3px #1d2a3e;">21</div>
<div class="t" id="v9" style="left:1553.00px;top:1225.43px;font-size:28.2px;font-weight:400;color:#1d2a3e;letter-spacing:0.550px;-webkit-text-stroke:0.3px #1d2a3e;">Low</div>
<div class="t" id="a9" style="left:1737.00px;top:1230.33px;font-size:28.2px;font-weight:400;color:#1d2a3e;letter-spacing:1.100px;-webkit-text-stroke:0.3px #1d2a3e;">Custom</div>
<div class="t" id="x9" style="left:2245.00px;top:1230.54px;font-size:27.6px;font-weight:400;color:#224fb7;letter-spacing:1.317px;-webkit-text-stroke:0.95px #224fb7;">Install</div>
<div class="t" id="b0" style="left:2049.40px;top:455.98px;font-size:24.6px;font-weight:400;color:#07101f;letter-spacing:0.000px;-webkit-text-stroke:0.8px #07101f;transform:scaleX(0.8405);transform-origin:0 0;">1/1</div>
<div class="t" id="b1" style="left:2046.00px;top:543.48px;font-size:24.6px;font-weight:400;color:#07101f;letter-spacing:0.000px;-webkit-text-stroke:0.8px #07101f;transform:scaleX(1.1185);transform-origin:0 0;">2/6</div>
<div class="t" id="b2" style="left:2048.20px;top:630.98px;font-size:24.6px;font-weight:400;color:#07101f;letter-spacing:0.000px;-webkit-text-stroke:0.8px #07101f;transform:scaleX(0.9794);transform-origin:0 0;">0/1</div>
<div class="t" id="b3" style="left:2047.00px;top:718.48px;font-size:24.6px;font-weight:400;color:#07101f;letter-spacing:0.000px;-webkit-text-stroke:0.8px #07101f;transform:scaleX(0.9944);transform-origin:0 0;">1/4</div>
<div class="t" id="b4" style="left:2047.00px;top:805.98px;font-size:24.6px;font-weight:400;color:#07101f;letter-spacing:0.000px;-webkit-text-stroke:0.8px #07101f;transform:scaleX(1.0063);transform-origin:0 0;">1/3</div>
<div class="t" id="b5" style="left:2049.40px;top:893.48px;font-size:24.6px;font-weight:400;color:#07101f;letter-spacing:0.000px;-webkit-text-stroke:0.8px #07101f;transform:scaleX(0.8405);transform-origin:0 0;">1/1</div>
<div class="t" id="b6" style="left:2048.20px;top:980.98px;font-size:24.6px;font-weight:400;color:#07101f;letter-spacing:0.000px;-webkit-text-stroke:0.8px #07101f;transform:scaleX(0.9794);transform-origin:0 0;">0/1</div>
<div class="t" id="b7" style="left:2048.20px;top:1066.48px;font-size:24.6px;font-weight:400;color:#07101f;letter-spacing:0.000px;-webkit-text-stroke:0.8px #07101f;transform:scaleX(0.9794);transform-origin:0 0;">0/1</div>
<div class="t" id="b8" style="left:2048.20px;top:1149.98px;font-size:24.6px;font-weight:400;color:#07101f;letter-spacing:0.000px;-webkit-text-stroke:0.8px #07101f;transform:scaleX(0.9794);transform-origin:0 0;">0/1</div>
<div class="t" id="b9" style="left:2048.20px;top:1233.48px;font-size:24.6px;font-weight:400;color:#07101f;letter-spacing:0.000px;-webkit-text-stroke:0.8px #07101f;transform:scaleX(0.9794);transform-origin:0 0;">0/1</div>
<div class="t" id="rpp" style="left:54.60px;top:1338.52px;font-size:23.6px;font-weight:400;color:#1d2a3e;letter-spacing:0.650px;-webkit-text-stroke:0.8px #1d2a3e;">Rows per page: 10</div>
<div class="t" id="p1" style="left:2051.80px;top:1338.79px;font-size:28.6px;font-weight:400;color:#1d2a3e;letter-spacing:0.000px;-webkit-text-stroke:0.9px #1d2a3e;">1</div>
<div class="t" id="p2" style="left:2097.80px;top:1338.79px;font-size:28.6px;font-weight:400;color:#1d2a3e;letter-spacing:0.000px;-webkit-text-stroke:0.9px #1d2a3e;">2</div>
<div class="t" id="p3" style="left:2147.80px;top:1338.79px;font-size:28.6px;font-weight:400;color:#1d2a3e;letter-spacing:0.000px;-webkit-text-stroke:0.9px #1d2a3e;">3</div>
<div class="t" id="p5" style="left:2247.60px;top:1338.79px;font-size:28.6px;font-weight:400;color:#1d2a3e;letter-spacing:0.000px;-webkit-text-stroke:0.9px #1d2a3e;">5</div>
<div class="t" id="p6" style="left:2296.80px;top:1338.79px;font-size:28.6px;font-weight:400;color:#1d2a3e;letter-spacing:0.000px;-webkit-text-stroke:0.9px #1d2a3e;">6</div>
<div class="t" id="p4" style="left:2197.40px;top:1338.44px;font-size:29.6px;font-weight:700;color:#2b63d3;letter-spacing:0.000px;">4</div>
</div></body></html>
